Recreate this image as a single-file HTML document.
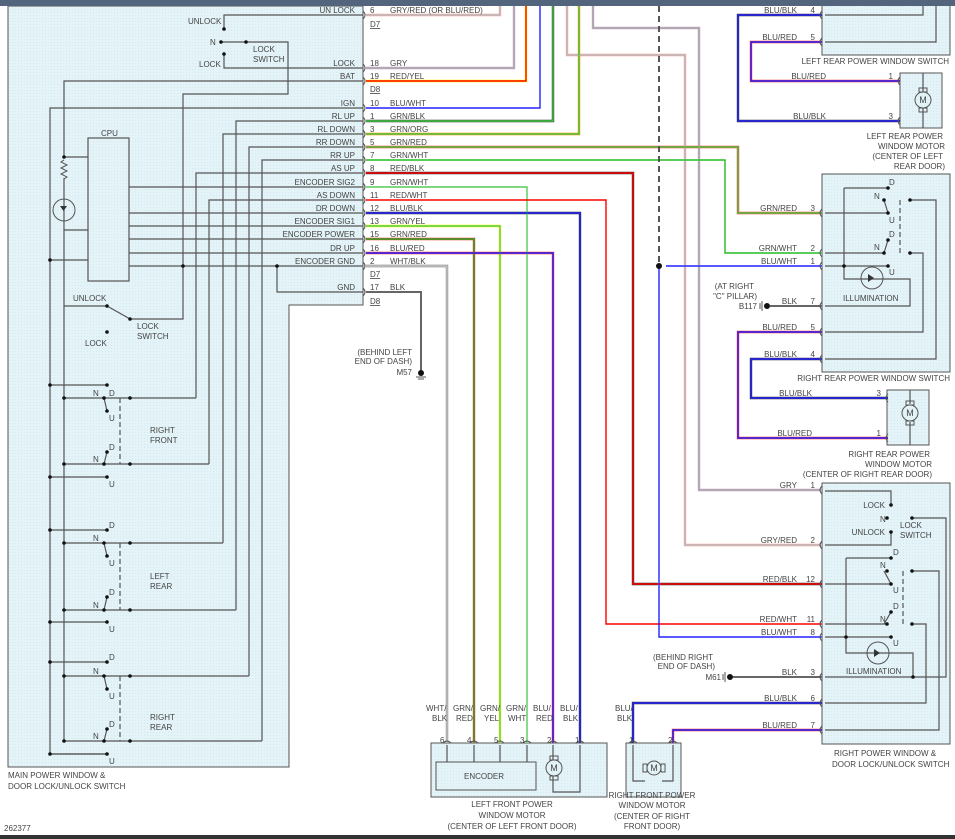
<!DOCTYPE html>
<html><head><meta charset="utf-8"><style>
html,body{margin:0;padding:0;background:#fff;}
svg{display:block;font-family:"Liberation Sans",sans-serif;font-size:8px;fill:#444;}
text{fill:#444;}
</style></head><body>
<svg width="955" height="839" viewBox="0 0 955 839" xmlns="http://www.w3.org/2000/svg">
<defs>
<pattern id="p" width="3" height="3" patternUnits="userSpaceOnUse"><rect width="3" height="3" fill="#e4f3f8"/><rect width="1" height="1" fill="#d4e8ef"/></pattern>
</defs>
<rect width="955" height="839" fill="#fff"/>
<path d="M8,6 H363 V305 H289 V767 H8 Z" fill="url(#p)" stroke="#555" stroke-width="1"/>
<rect x="822" y="0" width="128" height="55" fill="url(#p)" stroke="#555"/>
<rect x="900" y="73" width="42" height="55" fill="url(#p)" stroke="#555"/>
<rect x="822" y="174" width="128" height="198" fill="url(#p)" stroke="#555"/>
<rect x="887" y="390" width="42" height="55" fill="url(#p)" stroke="#555"/>
<rect x="822" y="483" width="128" height="261" fill="url(#p)" stroke="#555"/>
<rect x="431" y="743" width="176" height="54" fill="url(#p)" stroke="#555"/>
<rect x="436" y="762" width="100" height="28" fill="url(#p)" stroke="#555"/>
<rect x="626" y="743" width="55" height="54" fill="url(#p)" stroke="#555"/>

<g fill="none" stroke="#555" stroke-width="1.2">
<path d="M363,15 H224 V29"/><path d="M224,54 V68 H363"/>
<path d="M246,42 H288 V94 H183 V319 H130"/>
<path d="M221,42 H246"/>
<path d="M363,81 H64 V157"/><path d="M64,157 H88"/>
<path d="M64,178 V230 H88"/><path d="M64,230 V306 H107"/>
<path d="M363,108 H50 V754 H107"/><path d="M50,260 H88"/>
<rect x="88" y="138" width="41" height="143"/>
<path d="M363,121 H236 V610"/><path d="M363,134 H223 V543"/>
<path d="M363,147 H249 V676"/><path d="M363,160 H262 V741"/>
<path d="M363,173 H196 V398"/><path d="M363,200 H209 V464"/>
<path d="M129,187 H363 M129,213 H363 M129,226 H363 M129,239 H363 M129,253 H363 M129,266 H363"/>
<path d="M277,266 V292 H363"/>
<path d="M130,319 L107,306"/>
<path d="M50,385 H107 M64,398 H196 M50,477 H107 M64,464 H209"/>
<path d="M50,530 H107 M64,543 H223 M50,622 H107 M64,610 H236"/>
<path d="M50,662 H107 M64,676 H249 M50,754 H107 M64,741 H262"/>
<path d="M104,398 L107,411 M104,464 L107,452 M104,543 L107,556 M104,610 L107,597 M104,676 L107,689 M104,741 L107,729"/>
<path d="M64,306 V741"/>
<path d="M825,15 H923 V0 M825,42 H936 V0"/>
<path d="M825,213 H888 M844,188 H888 M844,188 V279 H910 V306 H825"/>
<path d="M910,200 H936 V359 H825 M910,253 H923 V332 H825"/>
<path d="M825,253 H884 M825,266 H888"/>
<path d="M884,200 L888,213 M884,253 L888,240"/>
<path d="M825,491 H891 V505 M891,532 V545 H825 M912,518 H946 V677 H825"/>
<path d="M846,558 H891 M846,558 V653 H913 V677 M912,571 H939 V730 H825 M912,624 H926 V703 H825"/>
<path d="M825,584 H891 M825,624 H887 M825,637 H891"/>
<path d="M884,571 L891,584 M884,624 L891,612"/>
<path d="M447,745 V762 M474,745 V762 M500,745 V762 M527,745 V762 M553,745 V760 M580,745 V792 H553 V776"/>
<path d="M633,745 V781 H645 M673,745 V781 H662"/>
<path d="M923,73 V92 M923,108 V128"/><path d="M910,390 V404 M910,422 V445"/>
</g>
<g fill="none" stroke="#555" stroke-width="1.2" stroke-dasharray="5,3">
<path d="M120,398 V464 M120,543 V610 M120,676 V741 M900,200 V253 M903,571 V624"/>
</g>
<g fill="none" stroke="#555" stroke-width="1">
<path d="M64,160 l-3,2 6,3 -6,3 6,3 -6,3 6,3 -3,2"/>
<circle cx="64" cy="210" r="11"/>
<circle cx="872" cy="278" r="11"/><circle cx="878" cy="653" r="11"/>
<circle cx="923" cy="100" r="8"/><circle cx="910" cy="413" r="8"/>
<circle cx="554" cy="768" r="8"/><circle cx="654" cy="768" r="7"/>
<rect x="550" y="756" width="8" height="4"/><rect x="550" y="776" width="8" height="4"/>
<rect x="919" y="88" width="8" height="4"/><rect x="919" y="108" width="8" height="4"/>
<rect x="906" y="401" width="8" height="4"/><rect x="906" y="421" width="8" height="4"/>
<rect x="643" y="764" width="4" height="8"/><rect x="661" y="764" width="4" height="8"/>
</g>
<path d="M60,206 h7 l-3.5,5 z M868,274 l6,4 -6,4 z M874,649 l6,4 -6,4 z" fill="#333"/>

<g fill="none" stroke-linejoin="miter">
<g stroke-width="2.4">
<path stroke="#f7a0a0" d="M366,15 H500 V0 M567,0 V55 H685 V545 H822"/>
<path stroke="#c8a0c8" d="M366,68 H514 V0 M593,0 V28 H699 V490 H822"/>
<path stroke="#ff0" d="M366,81 H526 V0"/>
<path stroke="#fff" d="M366,108 H540 V0"/>
<path stroke="#333" d="M366,121 H553 V0"/>
<path stroke="#f80" d="M366,134 H579 V0"/>
<path stroke="#f33" d="M366,147 H738 V213 H822"/>
<path stroke="#fff" d="M366,160 H725 V253 H822"/>
<path stroke="#333" d="M366,173 H633 V584 H822"/>
<path stroke="#fff" d="M366,187 H527 V743"/>
<path stroke="#fff" d="M366,200 H606 V624 H822"/>
<path stroke="#333" d="M366,213 H580 V743"/>
<path stroke="#ff0" d="M366,226 H500 V743"/>
<path stroke="#f33" d="M366,239 H474 V743"/>
<path stroke="#f33" d="M366,253 H553 V743"/>
<path stroke="#777" d="M366,266 H447 V743"/>
<path stroke="#fff" d="M666,266 H822 M659,266 V637 H822"/>
<path stroke="#333" d="M822,15 H738 V121 H900"/>
<path stroke="#f33" d="M822,42 H751 V81 H900"/>
<path stroke="#f33" d="M822,332 H738 V438 H888"/>
<path stroke="#333" d="M822,359 H751 V398 H888"/>
<path stroke="#333" d="M822,703 H633 V743"/>
<path stroke="#f33" d="M822,730 H673 V743"/>
</g>
<g stroke-width="1.4">
<path stroke="#bbb" d="M366,15 H500 V0 M567,0 V55 H685 V545 H822"/>
<path stroke="#aaa" d="M366,68 H514 V0 M593,0 V28 H699 V490 H822"/>
<path stroke="#f00" d="M366,81 H526 V0"/>
<path stroke="#22f" d="M366,108 H540 V0"/>
<path stroke="#4c4" d="M366,121 H553 V0"/>
<path stroke="#4c4" d="M366,134 H579 V0"/>
<path stroke="#4c4" d="M366,147 H738 V213 H822"/>
<path stroke="#2b2" d="M366,160 H725 V253 H822"/>
<path stroke="#f00" d="M366,173 H633 V584 H822"/>
<path stroke="#5c5" d="M366,187 H527 V743"/>
<path stroke="#f00" d="M366,200 H606 V624 H822"/>
<path stroke="#22f" d="M366,213 H580 V743"/>
<path stroke="#5c5" d="M366,226 H500 V743"/>
<path stroke="#2a2" d="M366,239 H474 V743"/>
<path stroke="#22f" d="M366,253 H553 V743"/>
<path stroke="#ccc" d="M366,266 H447 V743"/>
<path stroke="#22f" d="M666,266 H822 M659,266 V637 H822"/>
<path stroke="#22f" d="M822,15 H738 V121 H900"/>
<path stroke="#22f" d="M822,42 H751 V81 H900"/>
<path stroke="#22f" d="M822,332 H738 V438 H888"/>
<path stroke="#22f" d="M822,359 H751 V398 H888"/>
<path stroke="#22f" d="M822,703 H633 V743"/>
<path stroke="#22f" d="M822,730 H673 V743"/>
</g>
<path stroke="#666" stroke-width="2" d="M366,292 H421 V372 M770,306 H822 M733,677 H822"/>
<path stroke="#555" stroke-width="2" stroke-dasharray="6,4" d="M659,6 V262"/>
</g>

<g fill="none" stroke="#555" stroke-width="1">
<path d="M363,11 q4,4 0,8 M363,64 q4,4 0,8 M363,77 q4,4 0,8 M363,104 q4,4 0,8 M363,117 q4,4 0,8 M363,130 q4,4 0,8 M363,143 q4,4 0,8 M363,156 q4,4 0,8 M363,169 q4,4 0,8 M363,183 q4,4 0,8 M363,196 q4,4 0,8 M363,209 q4,4 0,8 M363,222 q4,4 0,8 M363,235 q4,4 0,8 M363,249 q4,4 0,8 M363,262 q4,4 0,8 M363,288 q4,4 0,8"/>
<path d="M822,11 q-4,4 0,8 M822,38 q-4,4 0,8 M900,77 q-4,4 0,8 M900,117 q-4,4 0,8 M822,209 q-4,4 0,8 M822,249 q-4,4 0,8 M822,262 q-4,4 0,8 M822,302 q-4,4 0,8 M822,328 q-4,4 0,8 M822,355 q-4,4 0,8 M888,394 q-4,4 0,8 M888,434 q-4,4 0,8 M822,486 q-4,4 0,8 M822,541 q-4,4 0,8 M822,580 q-4,4 0,8 M822,620 q-4,4 0,8 M822,633 q-4,4 0,8 M822,673 q-4,4 0,8 M822,699 q-4,4 0,8 M822,726 q-4,4 0,8"/>
<path d="M443,743 q4,-4 8,0 M470,743 q4,-4 8,0 M496,743 q4,-4 8,0 M523,743 q4,-4 8,0 M549,743 q4,-4 8,0 M576,743 q4,-4 8,0 M629,743 q4,-4 8,0 M669,743 q4,-4 8,0"/>
</g>
<g fill="#111">
<circle cx="659" cy="266" r="3"/>
<circle cx="224" cy="29" r="1.8"/><circle cx="221" cy="42" r="1.8"/><circle cx="246" cy="42" r="1.8"/><circle cx="224" cy="54" r="1.8"/>
<circle cx="64" cy="157" r="1.8"/><circle cx="50" cy="260" r="1.8"/><circle cx="183" cy="266" r="1.8"/><circle cx="277" cy="266" r="1.8"/>
<circle cx="107" cy="306" r="1.8"/><circle cx="130" cy="319" r="1.8"/><circle cx="107" cy="332" r="1.8"/>
<circle cx="50" cy="385" r="1.8"/><circle cx="107" cy="385" r="1.8"/><circle cx="64" cy="398" r="1.8"/><circle cx="104" cy="398" r="1.8"/><circle cx="130" cy="398" r="1.8"/><circle cx="107" cy="411" r="1.8"/>
<circle cx="107" cy="452" r="1.8"/><circle cx="64" cy="464" r="1.8"/><circle cx="104" cy="464" r="1.8"/><circle cx="130" cy="464" r="1.8"/><circle cx="50" cy="477" r="1.8"/><circle cx="107" cy="477" r="1.8"/>
<circle cx="50" cy="530" r="1.8"/><circle cx="107" cy="530" r="1.8"/><circle cx="64" cy="543" r="1.8"/><circle cx="104" cy="543" r="1.8"/><circle cx="130" cy="543" r="1.8"/><circle cx="107" cy="556" r="1.8"/>
<circle cx="107" cy="597" r="1.8"/><circle cx="64" cy="610" r="1.8"/><circle cx="104" cy="610" r="1.8"/><circle cx="130" cy="610" r="1.8"/><circle cx="50" cy="622" r="1.8"/><circle cx="107" cy="622" r="1.8"/>
<circle cx="50" cy="662" r="1.8"/><circle cx="107" cy="662" r="1.8"/><circle cx="64" cy="676" r="1.8"/><circle cx="104" cy="676" r="1.8"/><circle cx="130" cy="676" r="1.8"/><circle cx="107" cy="689" r="1.8"/>
<circle cx="107" cy="729" r="1.8"/><circle cx="64" cy="741" r="1.8"/><circle cx="104" cy="741" r="1.8"/><circle cx="130" cy="741" r="1.8"/><circle cx="50" cy="754" r="1.8"/><circle cx="107" cy="754" r="1.8"/>
<circle cx="888" cy="188" r="1.8"/><circle cx="884" cy="200" r="1.8"/><circle cx="910" cy="200" r="1.8"/><circle cx="888" cy="213" r="1.8"/>
<circle cx="888" cy="240" r="1.8"/><circle cx="884" cy="253" r="1.8"/><circle cx="910" cy="253" r="1.8"/><circle cx="888" cy="266" r="1.8"/><circle cx="844" cy="266" r="1.8"/>
<circle cx="891" cy="505" r="1.8"/><circle cx="887" cy="518" r="1.8"/><circle cx="912" cy="518" r="1.8"/><circle cx="891" cy="532" r="1.8"/>
<circle cx="891" cy="558" r="1.8"/><circle cx="887" cy="571" r="1.8"/><circle cx="912" cy="571" r="1.8"/><circle cx="891" cy="584" r="1.8"/>
<circle cx="891" cy="612" r="1.8"/><circle cx="887" cy="624" r="1.8"/><circle cx="912" cy="624" r="1.8"/><circle cx="891" cy="637" r="1.8"/><circle cx="846" cy="637" r="1.8"/><circle cx="913" cy="677" r="1.8"/>
<circle cx="421" cy="373" r="3"/><circle cx="767" cy="306" r="3"/><circle cx="730" cy="677" r="3"/>
</g>
<path d="M416,377 h10 M418,379 h6 M762,301 v10 M760,303 v6 M725,672 v10 M723,674 v6" stroke="#555" fill="none"/>

<g text-anchor="end">
<text x="355" y="13">UN LOCK</text><text x="355" y="66">LOCK</text><text x="355" y="79">BAT</text>
<text x="355" y="106">IGN</text><text x="355" y="119">RL UP</text><text x="355" y="132">RL DOWN</text>
<text x="355" y="145">RR DOWN</text><text x="355" y="158">RR UP</text><text x="355" y="171">AS UP</text>
<text x="355" y="185">ENCODER SIG2</text><text x="355" y="198">AS DOWN</text><text x="355" y="211">DR DOWN</text>
<text x="355" y="224">ENCODER SIG1</text><text x="355" y="237">ENCODER POWER</text><text x="355" y="251">DR UP</text>
<text x="355" y="264">ENCODER GND</text><text x="355" y="290">GND</text>
<text x="797" y="13">BLU/BLK</text><text x="797" y="40">BLU/RED</text><text x="826" y="79">BLU/RED</text><text x="826" y="119">BLU/BLK</text>
<text x="797" y="211">GRN/RED</text><text x="797" y="251">GRN/WHT</text><text x="797" y="264">BLU/WHT</text><text x="797" y="304">BLK</text>
<text x="797" y="330">BLU/RED</text><text x="797" y="357">BLU/BLK</text><text x="812" y="396">BLU/BLK</text><text x="812" y="436">BLU/RED</text>
<text x="797" y="488">GRY</text><text x="797" y="543">GRY/RED</text><text x="797" y="582">RED/BLK</text><text x="797" y="622">RED/WHT</text>
<text x="797" y="635">BLU/WHT</text><text x="797" y="675">BLK</text><text x="797" y="701">BLU/BLK</text><text x="797" y="728">BLU/RED</text>
<text x="815" y="13">4</text><text x="815" y="40">5</text><text x="893" y="79">1</text><text x="893" y="119">3</text>
<text x="815" y="211">3</text><text x="815" y="251">2</text><text x="815" y="264">1</text><text x="815" y="304">7</text>
<text x="815" y="330">5</text><text x="815" y="357">4</text><text x="881" y="396">3</text><text x="881" y="436">1</text>
<text x="815" y="488">1</text><text x="815" y="543">2</text><text x="815" y="582">12</text><text x="815" y="622">11</text>
<text x="815" y="635">8</text><text x="815" y="675">3</text><text x="815" y="701">6</text><text x="815" y="728">7</text>
<text x="949" y="64">LEFT REAR POWER WINDOW SWITCH</text>
<text x="943" y="139">LEFT REAR POWER</text><text x="945" y="149">WINDOW MOTOR</text><text x="943" y="159">(CENTER OF LEFT</text><text x="945" y="169">REAR DOOR)</text>
<text x="950" y="381">RIGHT REAR POWER WINDOW SWITCH</text>
<text x="930" y="457">RIGHT REAR POWER</text><text x="932" y="467">WINDOW MOTOR</text><text x="932" y="477">(CENTER OF RIGHT REAR DOOR)</text>
<text x="412" y="355">(BEHIND LEFT</text><text x="412" y="364">END OF DASH)</text><text x="412" y="375">M57</text>
<text x="754" y="289">(AT RIGHT</text><text x="757" y="299">"C" PILLAR)</text><text x="757" y="309">B117</text>
<text x="713" y="660">(BEHIND RIGHT</text><text x="715" y="669">END OF DASH)</text><text x="721" y="680">M61</text>
<text x="885" y="508">LOCK</text><text x="885" y="535">UNLOCK</text>
</g>
<g>
<text x="370" y="13">6</text><text x="390" y="13">GRY/RED  (OR BLU/RED)</text>
<text x="370" y="27" text-decoration="underline">D7</text>
<text x="370" y="66">18</text><text x="390" y="66">GRY</text>
<text x="370" y="79">19</text><text x="390" y="79">RED/YEL</text>
<text x="370" y="92" text-decoration="underline">D8</text>
<text x="370" y="106">10</text><text x="390" y="106">BLU/WHT</text>
<text x="370" y="119">1</text><text x="390" y="119">GRN/BLK</text>
<text x="370" y="132">3</text><text x="390" y="132">GRN/ORG</text>
<text x="370" y="145">5</text><text x="390" y="145">GRN/RED</text>
<text x="370" y="158">7</text><text x="390" y="158">GRN/WHT</text>
<text x="370" y="171">8</text><text x="390" y="171">RED/BLK</text>
<text x="370" y="185">9</text><text x="390" y="185">GRN/WHT</text>
<text x="370" y="198">11</text><text x="390" y="198">RED/WHT</text>
<text x="370" y="211">12</text><text x="390" y="211">BLU/BLK</text>
<text x="370" y="224">13</text><text x="390" y="224">GRN/YEL</text>
<text x="370" y="237">15</text><text x="390" y="237">GRN/RED</text>
<text x="370" y="251">16</text><text x="390" y="251">BLU/RED</text>
<text x="370" y="264">2</text><text x="390" y="264">WHT/BLK</text>
<text x="370" y="277" text-decoration="underline">D7</text>
<text x="370" y="290">17</text><text x="390" y="290">BLK</text>
<text x="370" y="304" text-decoration="underline">D8</text>
<text x="188" y="24">UNLOCK</text><text x="210" y="45">N</text><text x="199" y="67">LOCK</text>
<text x="253" y="52">LOCK</text><text x="253" y="62">SWITCH</text>
<text x="101" y="136">CPU</text>
<text x="73" y="301">UNLOCK</text><text x="85" y="346">LOCK</text><text x="137" y="329">LOCK</text><text x="137" y="339">SWITCH</text>
<text x="93" y="396">N</text><text x="109" y="396">D</text><text x="109" y="421">U</text>
<text x="109" y="450">D</text><text x="93" y="462">N</text><text x="109" y="487">U</text>
<text x="150" y="433">RIGHT</text><text x="150" y="443">FRONT</text>
<text x="109" y="528">D</text><text x="93" y="541">N</text><text x="109" y="566">U</text>
<text x="109" y="595">D</text><text x="93" y="608">N</text><text x="109" y="632">U</text>
<text x="150" y="579">LEFT</text><text x="150" y="589">REAR</text>
<text x="109" y="660">D</text><text x="93" y="674">N</text><text x="109" y="699">U</text>
<text x="109" y="727">D</text><text x="93" y="739">N</text><text x="109" y="764">U</text>
<text x="150" y="720">RIGHT</text><text x="150" y="730">REAR</text>
<text x="8" y="778">MAIN POWER WINDOW &amp;</text><text x="8" y="789">DOOR LOCK/UNLOCK SWITCH</text>
<text x="4" y="831">262377</text>
<text x="889" y="185">D</text><text x="874" y="199">N</text><text x="889" y="223">U</text>
<text x="889" y="237">D</text><text x="874" y="250">N</text><text x="889" y="275">U</text>
<text x="843" y="301">ILLUMINATION</text>
<text x="880" y="522">N</text><text x="900" y="528">LOCK</text><text x="900" y="538">SWITCH</text>
<text x="893" y="555">D</text><text x="880" y="568">N</text><text x="893" y="593">U</text>
<text x="893" y="609">D</text><text x="880" y="622">N</text><text x="893" y="646">U</text>
<text x="846" y="674">ILLUMINATION</text>
<text x="834" y="756">RIGHT POWER WINDOW &amp;</text><text x="832" y="767">DOOR LOCK/UNLOCK SWITCH</text>
<text x="426" y="711">WHT/</text><text x="432" y="721">BLK</text>
<text x="453" y="711">GRN/</text><text x="456" y="721">RED</text>
<text x="480" y="711">GRN/</text><text x="484" y="721">YEL</text>
<text x="506" y="711">GRN/</text><text x="508" y="721">WHT</text>
<text x="533" y="711">BLU/</text><text x="536" y="721">RED</text>
<text x="560" y="711">BLU/</text><text x="563" y="721">BLK</text>
<text x="615" y="711">BLU/</text><text x="617" y="721">BLK</text>
<text x="440" y="743">6</text><text x="467" y="743">4</text><text x="494" y="743">5</text><text x="520" y="743">3</text><text x="547" y="743">2</text><text x="575" y="743">1</text>
<text x="629" y="743">1</text><text x="668" y="743">2</text>
<text x="464" y="779">ENCODER</text>
</g>
<g text-anchor="middle">
<text x="554" y="771" font-size="9">M</text><text x="654" y="771" font-size="9">M</text>
<text x="923" y="103" font-size="9">M</text><text x="910" y="416" font-size="9">M</text>
<text x="512" y="807">LEFT FRONT POWER</text><text x="512" y="818">WINDOW MOTOR</text><text x="512" y="829">(CENTER OF LEFT FRONT DOOR)</text>
<text x="652" y="798">RIGHT FRONT POWER</text><text x="652" y="808">WINDOW MOTOR</text><text x="652" y="819">(CENTER OF RIGHT</text><text x="652" y="829">FRONT DOOR)</text>
</g>
<rect x="0" y="0" width="955" height="6" fill="#52657d"/>
<rect x="0" y="835" width="955" height="4" fill="#333"/>
</svg>
</body></html>
